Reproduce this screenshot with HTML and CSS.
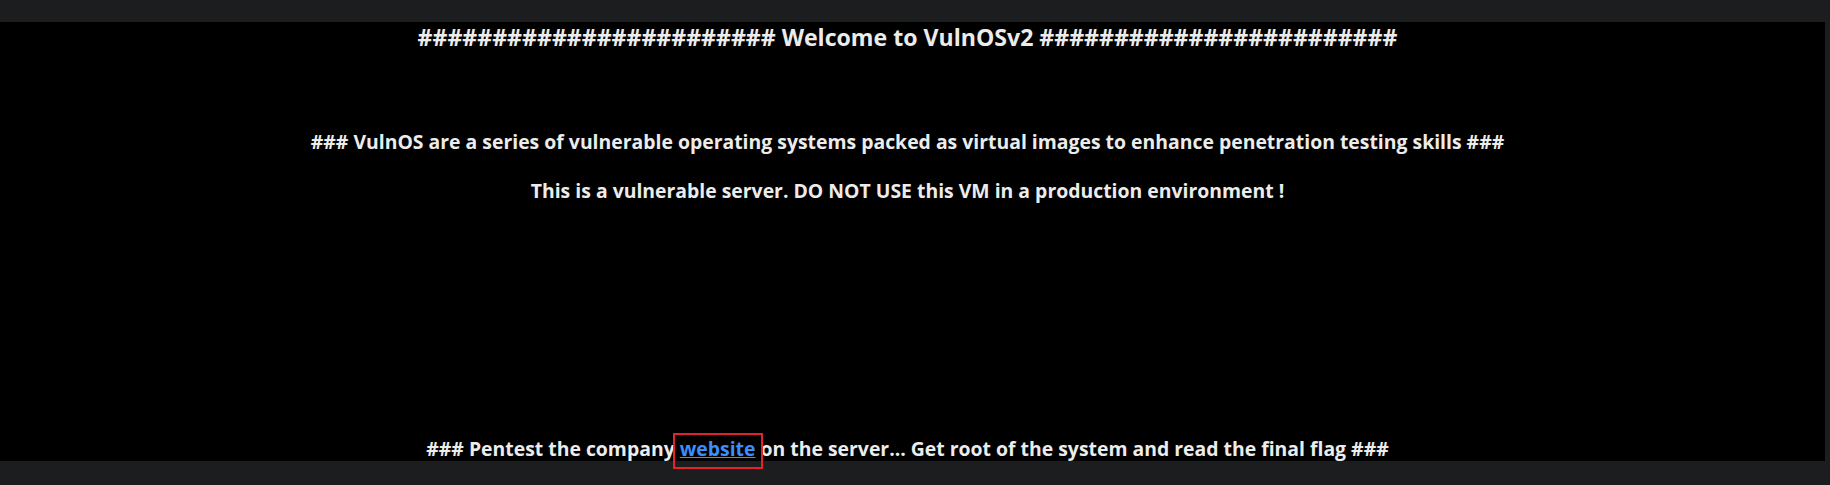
FILE: index.html
```html
<!DOCTYPE html>
<html lang="en">
<head>
<meta charset="utf-8">
<title>VulnOSv2</title>
<link rel="stylesheet" href="styles.css">
</head>
<body>
<div class="topbar"></div>
<div class="viewport">
  <main class="page">
    <h2 class="title">######################## Welcome to VulnOSv2 ########################</h2>
    <p class="intro">### VulnOS are a series of vulnerable operating systems packed as virtual images to enhance penetration testing skills ###</p>
    <p class="warn">This is a vulnerable server. DO NOT USE this VM in a production environment !</p>
    <p class="task">### Pentest the company <a class="link" href="#">website</a> on the server... Get root of the system and read the final flag ###</p>
  </main>
  <div class="scrollbar"></div>
</div>
<div class="bottombar"></div>
<div class="highlight"></div>
</body>
</html>
```
FILE: styles.css
```css
html, body {
  margin: 0;
  padding: 0;
}
body {
  position: relative;
  width: 1830px;
  height: 485px;
  overflow: hidden;
  display: flex;
  flex-direction: column;
  background: #000;
  font-family: "Open Sans", "Noto Sans", sans-serif;
  font-weight: 700;
  color: #ececec;
}
.topbar {
  height: 22px;
  background: #1c1d1f;
  flex: none;
}
.viewport {
  flex: 1;
  display: flex;
  overflow: hidden;
}
.page {
  flex: 1;
  padding-right: 10px;
  text-align: center;
  background: #000;
}
.scrollbar {
  width: 5px;
  background: #1c1d1f;
}
.bottombar {
  height: 24px;
  background: #1c1d1f;
  flex: none;
}
.title {
  margin: 0;
  font-size: 23.1px;
  line-height: 31.5px;
}
.intro {
  margin: 0;
  padding-top: 76px;
  font-size: 19.4px;
  line-height: 24px;
}
.warn {
  margin: 0;
  padding-top: 25px;
  font-size: 19.4px;
  line-height: 24px;
}
.task {
  margin: 0;
  padding-top: 234px;
  font-size: 19.4px;
  line-height: 24px;
}
.link {
  color: #3a8eff;
}
.highlight {
  position: absolute;
  left: 673px;
  top: 433px;
  width: 86px;
  height: 32px;
  border: 2px solid #e3222b;
  z-index: 2;
}
```
